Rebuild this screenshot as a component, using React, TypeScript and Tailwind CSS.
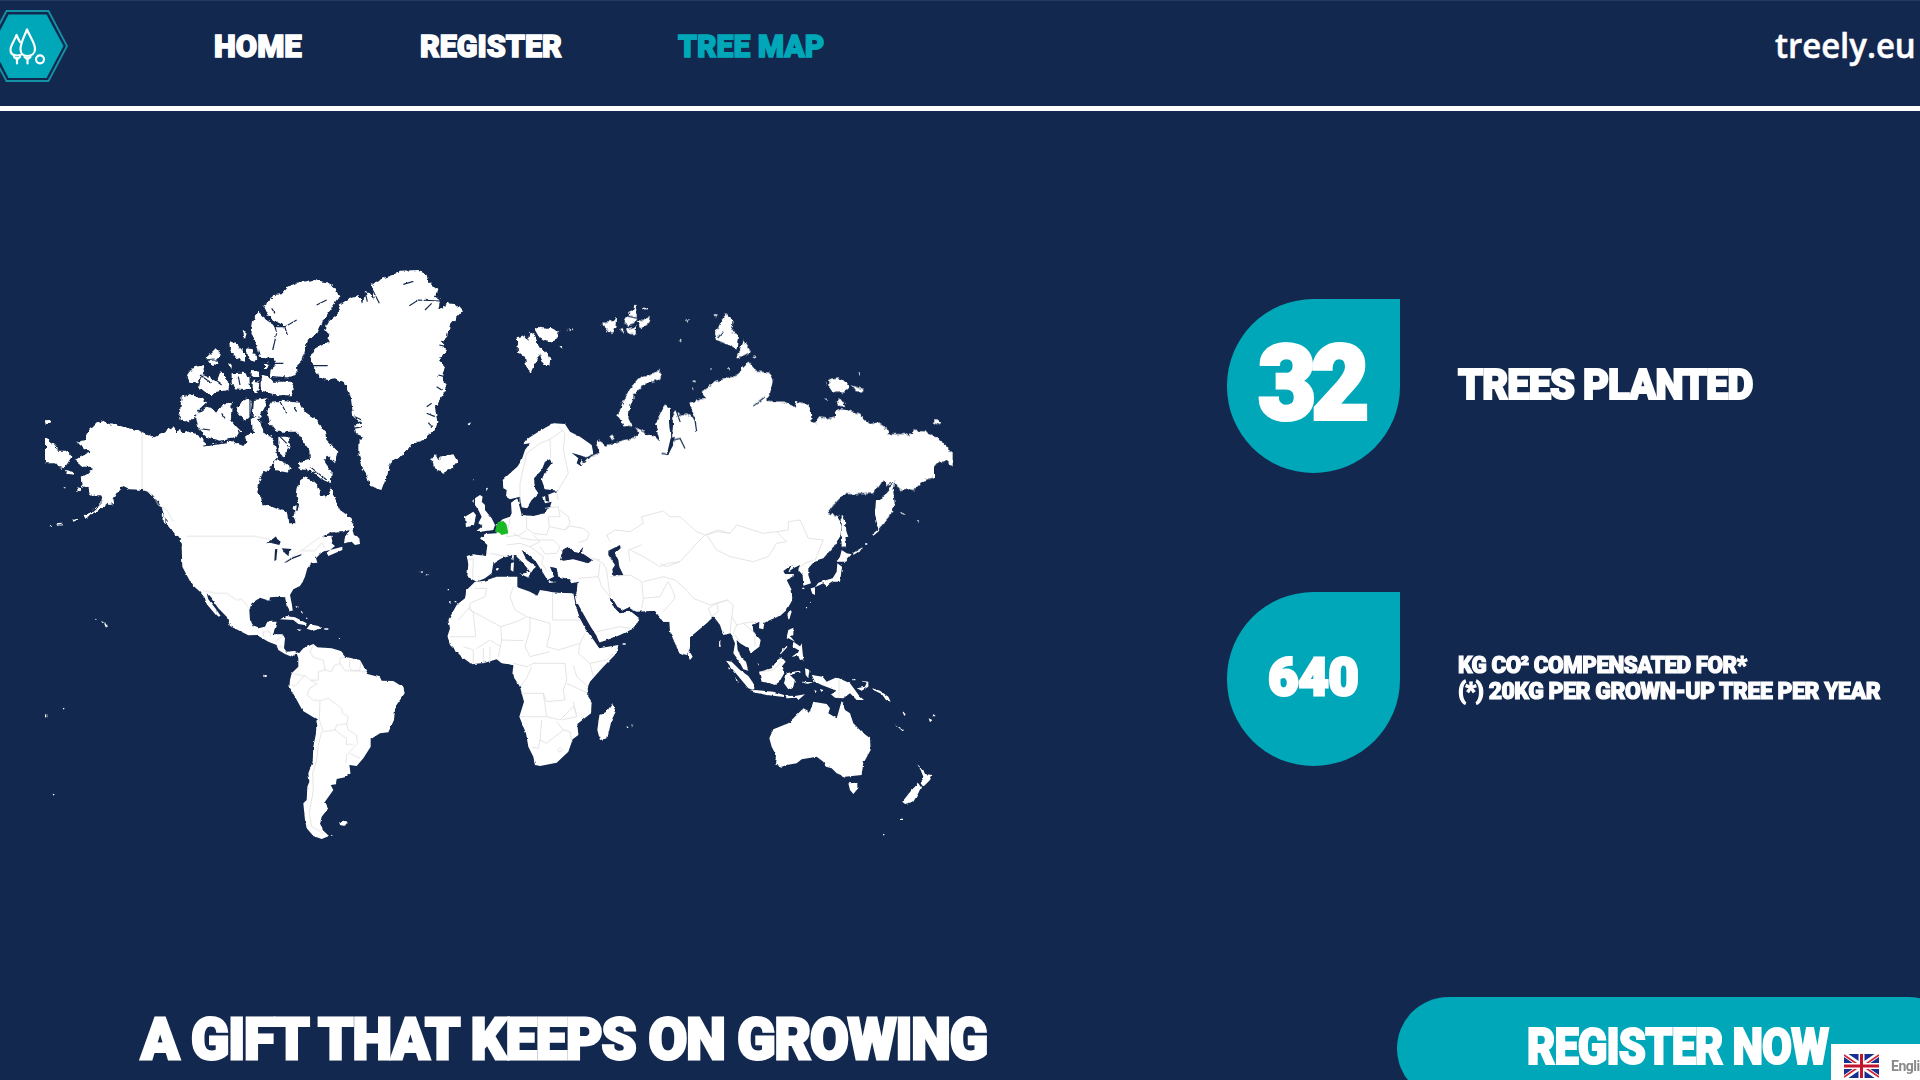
import React from "react";

const LAND = "#ffffff";
const SEA = "#13284e";

function Logo() {
  return (
    <svg className="block h-[92px] w-[72px] shrink-0" viewBox="0 0 72 92" fill="none">
      <path d="M6.500 10H48.500L67 45L48.500 80H6.500L-12 45Z" stroke="#1592a6" strokeWidth="1.800" />
      <path d="M8.500 13.500H46.500L63.500 45L46.500 77H8.500L-8 45Z" fill="#00a7b8" />
      <g transform="translate(0 -1)" stroke="#fff" strokeWidth="2.200" strokeLinecap="round" strokeLinejoin="round">
        <path d="M27 29.500C24 37 20.500 43 20.500 49C20.500 53.500 23.500 56 27.300 56C31.500 56 35 53.500 35 49C35 43 30 37 27 29.500Z" />
        <path d="M20 42C18.500 39.500 17.500 37.500 16.500 35C14.500 41 10.500 45 10.500 50C10.500 53.500 13 55.500 17 55.500C18.500 55.500 20 55.300 21 54.800" />
        <path d="M27.500 58V63.500M24.500 57L27.500 59.500L30.500 57M17 58V63.500M14 57L17 59.500L20 57" />
        <circle cx="40" cy="59.300" r="4" />
      </g>
    </svg>
  );
}

function WorldMap() {
  return (
    <svg className="block h-[580px] w-[910px] shrink-0" viewBox="45 265 910 580">
      <defs>
        <filter id="coast" x="0" y="0" width="1" height="1" filterUnits="objectBoundingBox">
          <feTurbulence type="fractalNoise" baseFrequency="0.22" numOctaves="2" seed="4" />
          <feDisplacementMap in="SourceGraphic" scale="5" xChannelSelector="R" yChannelSelector="G" />
        </filter>
        <filter id="shore" x="0" y="0" width="1" height="1" filterUnits="objectBoundingBox">
          <feTurbulence type="fractalNoise" baseFrequency="0.2" numOctaves="2" seed="9" />
          <feDisplacementMap in="SourceGraphic" scale="2.500" xChannelSelector="R" yChannelSelector="G" />
        </filter>
      </defs>

      {/* Arctic Canada, Alaska */}
      <g filter="url(#coast)">
        <g transform="translate(30 250) scale(.33333)" fill={LAND}>
          <path d="M142 575L165 570L172 545L195 522L222 512L240 522L280 530L320 540L345 550L372 562L395 552L412 540L430 532L440 548L450 536L455 550L470 543L500 555L525 575L530 588L565 580L600 572L640 588L650 575L645 560L660 548L672 550L668 520L676 505L690 520L700 548L725 560L737 590L742 620L720 655L700 665L685 700L680 725L693 738L697 765L720 768L750 780L770 785L775 820L790 832L797 822L790 795L808 770L800 740L803 710L820 680L845 690L860 705L875 740L890 738L905 712L915 745L930 780L965 805L970 835L940 845L900 848L870 872L840 900L458 900L455 880L430 845L412 822L398 780L385 755L365 735L340 720L300 718L280 708L262 725L250 745L200 785L178 792L220 752L210 736L182 738L175 715L155 708L152 680L188 660L182 650L160 650L135 630L165 612L182 608L150 585Z" />
          <path d="M45 563L75 585L85 602L108 602L124 622L103 655L85 650L75 640L45 640ZM44 508L60 507L65 516L47 524ZM105 660L130 665L128 674L108 670ZM232 752L250 745L252 762L235 765Z" />
          <path d="M160 798L185 785L195 790L165 806ZM128 810L145 803L147 808L130 815ZM78 823L98 821L98 826L80 827ZM58 825L66 826L65 831L60 830ZM142 712L155 715L152 724L142 722ZM98 711L104 712L102 716Z" />
          <path d="M700 168L720 152L730 135L755 133L775 110L800 98L850 90L890 97L915 115L928 140L905 175L880 210L862 250L832 272L825 305L818 330L798 350L800 375L775 382L720 382L722 360L738 345L735 325L690 320L680 280L664 250L670 210L685 185L700 200L735 230L765 228L740 215L715 200Z" />
          <path d="M598 273L620 282L645 310L645 332L620 325L600 300ZM650 295L665 298L682 325L672 335L655 325ZM635 240L648 245L650 262L640 262ZM527 325L555 297L570 305L565 325L530 328ZM535 330L562 328L565 342L548 348ZM470 382L490 352L520 345L522 362L500 400L475 398ZM507 412L515 375L535 380L560 395L572 362L585 385L598 400L595 420L560 425L545 436L525 425ZM605 370L640 368L658 380L660 415L640 420L612 418L605 398ZM665 360L690 362L690 382L665 380ZM668 392L688 395L685 430L668 425ZM695 375L715 378L730 395L782 395L792 415L785 436L735 436L695 425ZM703 338L718 342L712 355L702 350ZM595 335L605 345L605 356L597 350Z" />
          <path d="M455 440L485 432L520 445L528 458L505 480L495 500L475 520L448 500ZM498 492L530 470L545 475L560 490L580 462L605 455L603 510L620 530L635 545L610 565L570 572L530 562L508 540L500 515ZM620 480L635 455L655 445L665 460L660 500L645 512L625 490ZM672 450L712 445L705 470L690 500L668 498ZM665 505L685 500L700 545L668 545Z" />
          <path d="M712 480L725 455L750 452L810 458L825 485L860 510L885 545L890 570L925 605L915 640L895 620L880 630L905 665L902 700L880 690L850 665L805 655L808 635L840 630L838 600L820 575L800 545L780 545L740 545L720 520ZM745 560L775 560L780 590L760 620L745 605ZM735 630L760 635L785 655L775 668L735 660ZM790 770L800 765L798 782L788 780ZM395 790L402 792L408 820L398 812Z" />
        </g>
        {/* Greenland, Iceland, Svalbard */}
        <g transform="translate(280 250) scale(.33333)" fill={LAND}>
          <path d="M175 165L205 145L235 135L250 160L255 125L270 130L285 150L275 105L300 88L340 75L360 62L415 60L440 75L445 95L472 120L465 140L480 150L475 180L500 160L530 163L547 182L510 225L500 262L485 275L498 300L480 330L495 350L485 380L500 415L485 440L465 470L472 520L465 540L430 570L395 582L375 610L350 625L335 632L325 660L318 690L307 720L270 708L258 670L245 650L235 610L235 575L250 560L225 550L222 530L245 520L220 500L212 440L195 400L165 385L140 390L120 383L105 360L100 345L90 318L100 300L145 275L148 250L132 240L145 215L180 185Z" />
          <path d="M450 630L465 612L475 630L490 618L520 613L533 635L515 658L490 668L465 655L462 640ZM710 262L735 255L745 270L748 245L765 255L775 290L792 300L812 325L808 345L790 345L780 310L770 330L752 372L738 345L735 320L715 312ZM765 240L780 230L815 235L838 245L828 270L805 278L775 258ZM862 240L878 235L872 243ZM838 292L850 291L845 298ZM562 522L573 517L568 527Z" />
        </g>
        {/* Siberia */}
        <g transform="translate(580 290) scale(.33333)" fill={LAND}>
          <path d="M0 440L30 470L38 490L20 500L0 490V510L10 520L30 500L60 488L80 465L130 450L165 445L175 425L165 412L190 425L225 440L240 455L225 400L240 375L255 342L270 355L270 400L275 440L280 400L275 385L285 360L300 375L320 370L345 385L328 338L375 325L365 305L400 278L440 265L475 255L485 235L505 215L530 245L568 248L578 275L570 310L555 330L580 335L610 335L645 352L648 335L685 342L692 360L695 395L705 400L715 382L740 385L765 380L765 365L785 358L840 370L850 385L870 402L895 398L920 415L925 432L975 432L990 438L1000 422L1040 425L1065 440L1105 472L1105 482L1118 482V532L1100 515L1075 515L1062 530L1062 562L1035 570L1000 600L985 595L960 600L945 580L940 605L944 640L935 670L895 718L885 670L892 640L925 600L945 572L920 590L915 575L900 580L880 610L850 612L790 612L742 668L775 678L780 700L770 760L740 790L710 810L0 810V530L10 530L0 520Z" />
          <path d="M112 378L125 345L145 300L175 265L210 255L235 240L243 250L235 268L190 285L165 310L150 350L145 385L158 410L130 405ZM415 112L425 90L440 70L458 95L452 120L475 130L470 178L440 162L410 150L405 125ZM470 207L490 152L513 185ZM400 75L411 77L405 83ZM516 196L530 199L525 206ZM316 89L328 88L322 94ZM296 146L306 149L302 153ZM748 270L775 265L790 270L808 290L790 308L765 308L748 298ZM815 286L850 297L850 305L828 304ZM770 335L780 325L797 348L775 348ZM1057 398L1070 388L1085 398L1080 405ZM55 450L70 460L78 480L60 490L52 470ZM88 440L97 434L104 445L95 452ZM338 272H347V276H338ZM337 290L341 299H337ZM440 236L447 234L446 241ZM390 234L396 236L393 240ZM835 248H840V252H835ZM736 275L741 280L738 287ZM738 325L742 329L739 333Z" />
          <path d="M62 103L80 95L100 92L108 80L107 110L100 128L85 128L75 108ZM116 120L128 114L133 127ZM130 97L145 70L158 60L165 43L174 80L160 102L145 107ZM138 117L168 110L167 132L145 132ZM170 90L190 93L205 78L215 90L200 102L180 115ZM190 53H204V58H190Z" />
          <path d="M785 675L795 690L796 740L800 770L785 770Z" />
        </g>
      </g>

      <g filter="url(#shore)">
        {/* Southern North America, Central and South America */}
        <g transform="translate(30 480) scale(.33333)" fill={LAND}>
          <path d="M430 130L970 130L968 145L940 152L900 157L872 175L890 166L912 168L905 190L915 198L890 218L895 228L937 210L937 200L920 205L885 214L870 222L858 235L862 248L845 250L832 265L825 290L818 305L810 318L790 328L780 345L785 370L788 390L780 393L770 375L765 352L745 350L720 352L718 362L690 353L665 370L658 390L660 420L672 440L685 445L705 440L712 425L740 425L735 445L728 463L758 463L765 475L762 505L770 515L795 513L807 520L820 505L850 492L862 502L905 505L930 512L945 530L990 540L1010 575L1015 583L1050 592L1055 602L1090 603L1120 622L1124 640L1096 680L1092 720L1075 757L1050 760L1022 778L1022 800L1000 835L980 858L958 855L962 880L945 892L920 897L918 913L902 915L910 930L885 965L895 985L875 1010L870 1030L878 1050L897 1068L875 1077L850 1068L830 1045L825 1020L820 970L830 960L832 920L838 905L835 880L848 845L850 800L858 760L860 718L818 692L795 650L778 620L780 600L785 580L805 560L805 535L800 520L785 530L765 522L745 510L740 495L715 485L680 465L655 466L600 438L590 410L565 385L545 357L530 340L535 358L560 390L572 408L562 410L530 372L525 355L510 335L485 313L470 285L457 260L455 200L460 180L445 160Z" />
          <path d="M945 170L955 155L965 142L972 165L988 175L990 192L975 195L965 185L942 190ZM750 418L770 408L795 412L830 430L828 436L805 432L790 420ZM830 446L840 433L865 438L875 445L850 452ZM800 447L815 449L808 453ZM883 445H895V449H883ZM796 378L808 381L800 384ZM815 392L820 402L812 396ZM828 412L834 416L829 417ZM926 473L931 475L928 478ZM928 1027L940 1022L953 1026L945 1037L930 1035ZM222 430L234 435L228 443ZM213 423L222 427L218 430ZM195 416L201 418L197 420ZM35 705L47 703L46 711L35 711ZM98 683L104 685L101 689ZM68 941L74 943L70 947ZM700 584L708 586L706 592L700 590ZM1168 275L1176 274L1174 280ZM1189 282H1195V286H1189ZM903 1064L908 1066L905 1070Z" />
          <path d="M45 703H52V709H45Z" />
        </g>
        {/* Europe, Africa, Middle East, India */}
        <g transform="translate(430 400) scale(.33333)" fill={LAND}>
          <path d="M218 240L240 220L262 200L275 180L285 150L300 130L280 133L295 115L330 92L370 70L405 72L420 95L450 110L485 135L490 160L470 172L425 158L445 175L440 190L462 205L470 185L500 165L520 160L900 150V640L880 655L878 625L850 650L830 670L780 712L780 745L770 765L750 760L735 720L720 680L720 665L700 665L675 632L620 635L598 625L575 635L555 615L545 595L540 600L560 630L570 640L600 632L628 655L612 685L570 705L510 730L500 712L480 680L462 655L440 615L435 590L440 575L443 545L425 550L420 538L385 530L380 505L360 500L372 530L352 540L340 520L318 485L290 460L275 450L290 480L318 500L310 508L295 530L275 522L300 515L280 490L255 465L235 468L215 475L190 490L185 520L165 535L140 545L112 530L115 490L110 468L130 463L168 468L172 435L150 415L165 402L200 400L200 375L218 358L240 350L245 340L243 308L262 295L270 325L275 345L310 348L345 340L360 320L365 305L345 310L340 290L365 280L385 272L345 268L335 240L345 215L365 190L360 178L345 185L335 210L312 235L315 265L325 280L305 300L290 325L275 322L270 290L240 298L228 290L230 270L220 265Z" />
          <path d="M140 545L165 542L200 530L262 530L262 562L300 575L322 587L330 570L380 578L430 580L437 615L450 655L470 690L508 745L565 735L560 760L520 800L480 845L473 862L475 890L485 905L483 940L442 972L445 1005L428 1018L415 1055L380 1088L330 1098L315 1095L310 1070L295 1040L288 1000L268 950L282 905L270 860L247 825L250 795L215 790L200 778L165 788L125 793L95 770L60 735L52 710L60 685L55 660L80 615L105 595L110 570L135 545Z" />
          <path d="M547 910L557 935L545 960L532 1015L510 1020L502 990L508 945L530 935ZM778 752L788 770L780 780L772 765ZM868 725L873 740H867ZM578 730H587V734H578ZM590 978L596 982L591 985ZM604 973L610 977L606 980ZM53 567H57V571H53ZM57 604H62V608H57ZM74 603H79V607H74Z" />
          <path d="M135 295L150 285L158 290L155 305L165 315L165 330L185 355L195 375L190 390L150 396L140 392L158 378L145 370L155 350L145 330L135 315ZM105 350L130 335L138 345L132 375L108 382ZM168 265L174 263L170 274ZM126 236L132 239L128 242ZM127 302L132 298L130 310ZM268 520L297 523L295 533ZM243 490L252 487L250 515L242 510ZM245 470L252 465L250 483ZM198 505L207 504L203 512ZM355 543L378 546L358 549ZM420 543L436 538L425 550Z" />
        </g>
        {/* East and South-East Asia, Oceania */}
        <g transform="translate(640 500) scale(.33333)" fill={LAND}>
          <path d="M0 0H590L560 40L575 50L595 55L605 80L600 110L580 140L550 175L525 182L505 205L505 225L513 250L490 257L488 225L475 210L480 195L460 205L445 215L455 195L430 213L435 222L462 222L460 230L440 240L455 270L457 300L440 330L420 348L395 358L373 368L370 388L357 385L358 365L338 375L340 395L362 420L358 440L332 460L325 445L300 430L290 420L293 450L305 475L318 485L325 512L310 508L295 480L280 460L285 430L272 400L250 405L240 375L225 355L215 352L200 368L150 410L150 440L128 465L118 460L90 395L88 365L70 365L45 332L0 332Z" />
          <path d="M608 45L612 75L625 110L612 112L613 135L605 140ZM605 150L620 160L635 163L615 185L590 185L600 170ZM592 190L606 200L600 245L580 245L560 258L550 250L525 262L535 248L560 240L578 235L590 215ZM512 265L525 262L525 285L515 280ZM640 158L665 143L668 147L640 165ZM697 103L715 88L718 92L700 107ZM675 130H682V134H675ZM705 40L708 0H762L760 20L740 55L715 85ZM780 35L790 40L798 45L785 42ZM833 63L838 65L835 68ZM442 345L452 330L455 335L447 360ZM445 390L460 383L460 405L452 410L465 425L440 412ZM420 460L440 437L442 441L422 463ZM455 470L470 460L485 430L490 478L480 480L475 468ZM460 425L482 440L475 450L458 440ZM510 305L515 307L512 310ZM497 322L502 320L500 326ZM487 263H493V267H487Z" />
          <path d="M357 515L370 512L395 505L412 480L425 472L437 485L425 500L433 520L418 545L405 555L385 548L365 545ZM258 482L275 485L300 510L325 528L340 550L340 570L325 565L300 535L275 505ZM330 572L345 570L400 575L432 585L432 591L380 585L340 577ZM440 520L475 512L480 517L450 525L465 540L460 560L445 568L432 550ZM435 587L465 588L495 583L475 600L470 593L440 595ZM495 505L508 510L505 535L497 525ZM485 545L522 547L500 552ZM237 425L242 420L240 438ZM540 567L550 570L545 580ZM523 570L530 573L526 580ZM265 500L272 508H266ZM285 530L297 548L290 545ZM351 491H356V496H351Z" />
          <path d="M515 525L548 530L560 545L590 532L630 550L645 570L658 588L672 600L650 600L630 580L610 595L585 593L572 582L590 572L545 555L525 545ZM650 565L675 560L680 548L665 542L685 545L685 560L665 572ZM697 565L720 572L745 590L752 605L738 600L725 582L700 570ZM765 673L792 690L788 694ZM785 630L797 643L793 648ZM880 642L887 648L878 650ZM866 655L877 660L870 667ZM640 537H646V541H640Z" />
          <path d="M388 715L400 688L445 670L470 645L490 625L510 635L520 605L560 612L570 625L565 640L590 655L605 603L615 630L630 640L640 670L665 695L690 715L692 750L670 790L665 825L615 830L590 820L575 805L558 800L550 785L530 770L485 778L470 790L440 795L425 800L405 793L408 765L395 740ZM625 850L652 848L652 868L640 882L630 870ZM832 793L850 810L855 822L877 825L870 840L850 860L842 850L850 830L842 810ZM835 850L843 862L835 880L820 905L795 912L787 905L815 870ZM780 956H787V960H780ZM727 1002H733V1006H727Z" />
        </g>
        {/* Inland water and narrow seas */}
        <g fill={SEA}>
          <g transform="translate(30 480) scale(.33333)">
            <path d="M708 190L735 172L752 185L748 195L720 188ZM733 243L735 208L742 207L739 240ZM755 205L785 207L778 215L775 228L765 220ZM765 245L788 232L815 222L812 227L785 238L768 248Z" />
            <path d="M875 170L900 158L945 156L945 170L930 195L905 180L905 166Z" />
          </g>
          <g transform="translate(430 400) scale(.33333)">
            <path d="M390 480L400 448L415 440L430 455L445 458L460 440L455 458L487 480L475 490L430 478L400 482ZM535 452L570 435L572 445L555 460L565 480L568 500L580 525L550 528L547 508L555 495L535 465ZM345 285L355 285L358 305L347 303ZM710 165L722 115L735 110L725 140L715 165Z" />
            <path d="M434 608L444 612L462 645L482 680L500 708L506 728L575 706L575 718L510 744L494 722L468 690L452 658ZM538 592L550 600L562 620L580 630L600 620L602 632L570 640L552 622Z" />
          </g>
        </g>
      </g>

      {/* Fjords and inlets */}
      <g fill="none" stroke={SEA} strokeWidth="3.500" filter="url(#shore)">
        <path transform="translate(280 250) scale(.33333)" d="M388 167L415 150L480 153M435 180L455 160M485 150L488 175M498 148L495 170M95 347H140M255 125L262 155M275 115L298 160M370 103L400 94M445 518L455 530M478 285L500 290M478 320L492 328M475 375L495 380M470 410L485 420M455 460L440 470M465 500L440 490M225 500L245 510M222 535L245 530" />
        <path transform="translate(30 250) scale(.33333)" d="M705 205L740 230L765 230L800 210M765 232L772 255M735 232L740 245M740 250L728 300M700 340H760M510 375L545 400M660 430V500M655 505L665 545M725 380L785 385M520 588L590 578M735 545L770 580M625 540L640 585M505 535L540 540M840 650L890 690M750 455L770 490M790 470L800 485M530 470L505 490M575 490L585 505M860 165L890 150M725 175L735 190M555 390L575 405M625 380L630 405M770 590L820 595L830 610M780 610L800 640" />
        <path transform="translate(580 290) scale(.33333)" d="M275 380V440L278 465L262 493L245 490M280 450L300 445L315 475M285 350L300 395M555 320L520 348M325 360L345 390L350 425M412 145L430 125M130 75L175 85" />
      </g>

      {/* Country borders */}
      <g fill="none" stroke="#dfdfdf" strokeWidth="2.500" strokeLinejoin="round">
        <path transform="translate(30 250) scale(.33333)" d="M336 545V715L370 735L385 765L410 780L430 815" />
        <path transform="translate(30 480) scale(.33333)" d="M470 169H675L720 178M815 212H855L875 188L885 205M765 245L870 172M520 332L560 340H590L620 360L635 357L657 385M700 470V455H720L722 470M735 485L758 468M740 500H760M850 495L840 515L850 532L880 540L885 570L905 575L912 557L930 550V535L945 530M930 550L945 572L965 572M960 540L958 560L965 572L990 570L992 545M965 572L1010 575M790 580L830 590L840 600L865 600L865 575L885 570M785 615L795 618L825 585M840 600L862 612L838 625L832 645L850 660L870 662L895 655L935 685L938 700L955 710L950 732L920 735L915 750L880 755L868 720L870 662M950 732L955 750L980 765V780L985 787L950 825L948 850M915 750L950 775L948 793L970 793M960 820L990 835M875 755L865 795L860 840L848 880L850 930L838 1000L845 1040L880 1060" />
        <path transform="translate(430 400) scale(.33333)" d="M270 310V250L290 160L330 130L360 118L400 90M360 118L362 175M385 80L405 100L400 150L415 220L385 270M345 325L385 320L390 350L355 350M385 300L380 280M390 330L415 350L420 370L405 390L360 380M290 350L290 385L310 400L350 405L358 380L355 350M240 355L230 410L270 405L290 390M230 435L270 430L300 440L330 425L310 405M250 400L275 415L310 420L345 420L370 420L390 440L380 460L345 462L330 440M300 440L320 455L340 470L335 490L350 510M405 390L420 378L460 385L478 400L470 420L445 428M540 425L530 405L555 390L600 395L640 370L635 350L700 333L720 350L750 350L800 395L825 405L865 390L900 400M600 485L595 450L635 435M600 450L640 470L690 500L715 490L750 485M540 530L600 525L635 545L640 595L635 625M640 545L700 530L735 540L770 570L790 595L840 615L895 600M640 595L690 590L705 560L715 545L730 575L735 595L700 635M825 405L800 430L750 485L710 500L690 490M500 480L520 490L530 510L540 590M480 475L510 480M445 535L505 530L515 560L540 590M505 530L510 490M500 695L570 680L600 685M115 480L130 475L128 535M180 460L235 470M135 565L170 565L165 590L120 610V630L212 680L260 665L290 650L360 670M120 620L85 660M120 625L130 640L137 710L60 710M250 560L240 590L255 630L290 650M368 580V660H450M360 670V700L350 740L385 750L450 730L465 700M300 650L300 690L285 740L300 770L360 755M212 680L215 720L280 722M215 720L205 770M140 745L180 720L212 740M180 740V785M160 745V790M100 740L130 750V790M450 730L445 760L480 790L530 780L550 760M480 790L490 830M250 790L290 800L310 790L405 790L410 840L400 870L405 900L350 905L340 880H275M270 860L290 835L305 800M410 850L475 880M430 795L440 830L475 860M340 880L350 950L390 960L430 920L440 940M350 950L270 950M335 960L330 1020L350 1030L400 990L380 965M330 1020L325 1045L305 1042M400 990L420 995L425 1020M390 1042L398 1050L388 1056L383 1050ZM430 905L440 950L395 960" />
        <path transform="translate(640 500) scale(.33333)" d="M200 105L230 95L270 100L290 75L370 100L410 95L440 125L410 130L385 170L340 185L270 170L230 150L200 105M410 95L445 90V65L480 60L505 115L550 120L530 170L525 182M475 205L495 190L520 180M205 325L230 310L262 300L280 315L275 350L290 375L310 370L340 365M275 350L270 400M290 375L280 400L300 425M310 370L345 400L345 440M205 325L215 350L235 335L230 310M365 515L400 510L425 485M597 540V595" />
      </g>

      <path transform="translate(430 400) scale(.33333)" d="M204 366L220 363L229 372L235 400L215 405L208 398L195 395L199 378Z" fill="#18b922" />
    </svg>
  );
}

function Stat({ value, valueClass, children }: { value: string; valueClass: string; children: React.ReactNode }) {
  return (
    <div className="flex h-[174px] items-center">
      <div className="flex h-full w-[173px] shrink-0 items-center justify-center rounded-full rounded-tr-none bg-[#00a7b8] leading-none">
        <span className={valueClass}>{value}</span>
      </div>
      <div className="ml-[58px]">{children}</div>
    </div>
  );
}

function UnionJack() {
  return (
    <svg className="h-6 w-[35px] shrink-0" viewBox="0 0 35 24">
      <path fill="#172f8f" d="M0 0H35V24H0Z" />
      <path stroke="#fff" strokeWidth="5" d="M0 0L35 24M35 0L0 24" />
      <path stroke="#cf2434" strokeWidth="1.700" d="M0 1L16 12M19 12L35 23M35 1L19 12M16 12L0 23" />
      <path stroke="#fff" strokeWidth="6" d="M17.500 0V24M0 12H35" />
      <path stroke="#c3142d" strokeWidth="3" d="M17.500 0V24M0 12H35" />
    </svg>
  );
}

export default function App() {
  return (
    <div className="relative h-[1080px] w-[1920px] overflow-hidden bg-[#13284e] font-['Roboto',sans-serif] font-black whitespace-nowrap text-white">
      <header className="flex h-[111px] items-start border-t border-b-[5px] border-t-[#243b61] border-b-white">
        <Logo />
        <nav className="mt-[30px] ml-[142px] flex text-[31px] leading-none [-webkit-text-stroke:1.5px_currentColor]">
          <a className="w-[206px]">HOME</a>
          <a className="w-[258px]">
            <span className="inline-block origin-left scale-x-[0.98]">REGISTER</span>
          </a>
          <a className="text-[#00a7b8]">
            <span className="inline-block origin-left scale-x-[0.97]">TREE MAP</span>
          </a>
        </nav>
        <div className="mt-[26px] mr-[4px] ml-auto origin-right scale-x-[0.94] font-['Open_Sans',sans-serif] text-[35px] leading-none font-semibold [-webkit-text-stroke:0.5px_currentColor]">
          treely.eu
        </div>
      </header>

      <main>
        <section className="flex pt-[154px] pl-[45px]">
          <WorldMap />
          <div className="mt-[34px] ml-[272px] flex flex-col gap-[119px]">
            <Stat value="32" valueClass="mb-[5px] scale-x-[0.96] pr-1 text-[104px] tracking-[-5px] [-webkit-text-stroke:4px_currentColor]">
              <p className="mb-0.5 origin-left scale-x-[0.95] text-[42px] leading-none tracking-[-1px] [-webkit-text-stroke:2px_currentColor]">
                TREES PLANTED
              </p>
            </Stat>
            <Stat value="640" valueClass="mb-[2px] text-[52px] [-webkit-text-stroke:3px_currentColor]">
              <p className="mb-0.5 text-[23.5px] leading-[26px] tracking-[-0.5px] [-webkit-text-stroke:1.1px_currentColor]">
                <span className="inline-block origin-left scale-x-[0.955]">KG CO² COMPENSATED FOR*</span>
                <br />
                <span className="inline-block origin-left scale-x-[0.978]">(*) 20KG PER GROWN-UP TREE PER YEAR</span>
              </p>
            </Stat>
          </div>
        </section>

        <section className="mt-[152px] flex items-start">
          <h1 className="mt-[13px] ml-[141px] w-[1256px] shrink-0 text-[58px] leading-none tracking-[-1.2px] [-webkit-text-stroke:2.8px_currentColor]">
            <span className="inline-block origin-left scale-x-[0.97]">A GIFT THAT KEEPS ON GROWING</span>
          </h1>
          <button className="h-[103px] w-[563px] shrink-0 rounded-full bg-[#00a7b8] pb-[4px] pl-[130px] text-left text-[50px] leading-none font-black tracking-[-1px] [-webkit-text-stroke:2px_currentColor]">
            <span className="inline-block origin-left scale-x-[0.868]">REGISTER NOW</span>
          </button>
        </section>
      </main>

      <div className="absolute top-[1044px] left-[1831px] flex h-9 w-[120px] items-center gap-3 bg-white pt-[9px] pb-[2px] pl-[13px] text-sm font-bold tracking-[-0.5px] text-[#8a8a8a]">
        <UnionJack />
        <span>English</span>
      </div>
    </div>
  );
}
